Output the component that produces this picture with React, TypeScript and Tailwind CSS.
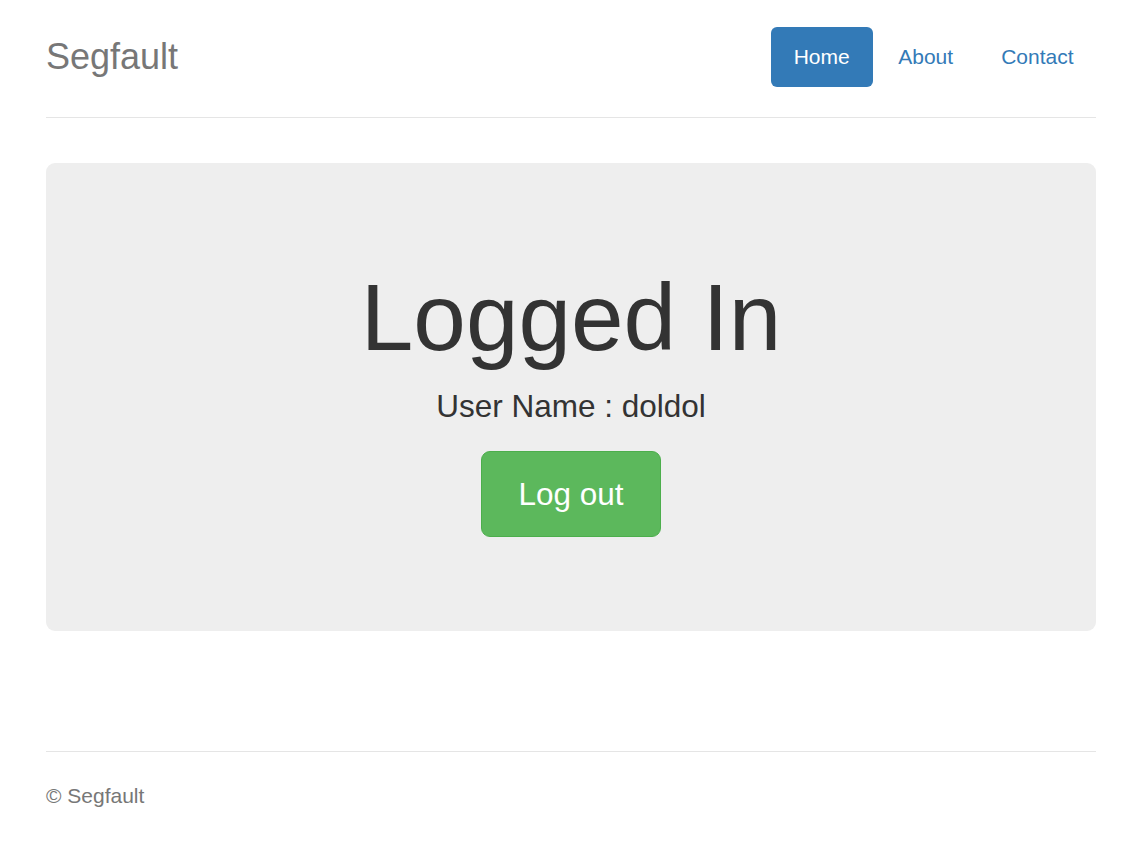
export default function App() {
  const links = [
    { label: "Home", active: true },
    { label: "About", active: false },
    { label: "Contact", active: false },
  ];

  return (
    <div className="min-h-screen bg-white text-[#333] font-['Liberation_Sans',Arial,sans-serif]">
      <div className="ml-[46px] w-[1050px] pt-[27px]">
        {/* header */}
        <div className="flex items-center justify-between pb-[30px] border-b border-[#e5e5e5]">
          <h3 className="m-0 text-[36px] leading-[60px] text-[#777]">Segfault</h3>
          <nav className="flex">
            {links.map((link) =>
              link.active ? (
                <a
                  key={link.label}
                  href="#"
                  className="ml-[3px] rounded-[6px] bg-[#337ab7] px-[23px] text-[21px] leading-[60px] text-white"
                >
                  {link.label}
                </a>
              ) : (
                <a
                  key={link.label}
                  href="#"
                  className="ml-[3px] rounded-[6px] px-[22.5px] text-[21px] leading-[60px] text-[#337ab7]"
                >
                  {link.label}
                </a>
              )
            )}
          </nav>
        </div>

        {/* jumbotron */}
        <div className="mt-[45px] rounded-[9px] bg-[#eee] pt-[72px] pb-[72px] text-center">
          <h1 className="mt-[30px] mb-[15px] text-[94.5px] leading-[104px] font-normal">Logged In</h1>
          <p className="mb-[22px] text-[31.5px] leading-[45px]">User Name : doldol</p>
          <div className="mb-[22px] flex justify-center">
            <button className="rounded-[9px] border-[1.5px] border-[#4cae4c] bg-[#5cb85c] px-[36px] py-[21px] text-[31.5px] leading-[42px] text-white">
              Log out
            </button>
          </div>
        </div>

        {/* footer */}
        <footer className="mt-[120px] border-t border-[#e5e5e5] pt-[28.5px]">
          <p className="text-[21px] leading-[30px] text-[#777]">© Segfault</p>
        </footer>
      </div>
    </div>
  );
}
